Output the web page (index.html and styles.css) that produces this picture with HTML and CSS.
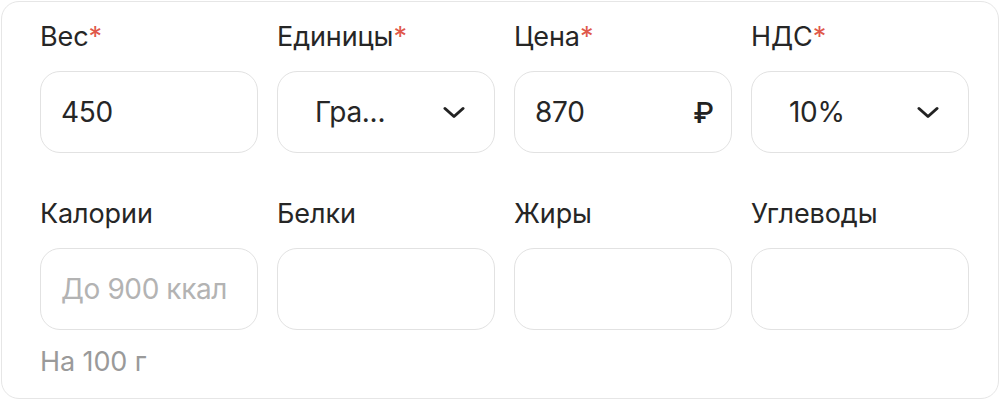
FILE: index.html
```html
<!DOCTYPE html>
<html lang="ru">
<head>
<meta charset="utf-8">
<link rel="stylesheet" href="styles.css">
</head>
<body>
<div class="card">
  <div class="grid">
    <div class="field">
      <div class="label">Вес<span class="req">*</span></div>
      <div class="box"><span class="value">450</span></div>
    </div>
    <div class="field">
      <div class="label">Единицы<span class="req">*</span></div>
      <div class="box select"><span class="value">Гра...</span>
        <svg class="chev" width="22" height="13" viewBox="0 0 22 13"><path d="M2 2.5 L11 10.5 L20 2.5" fill="none" stroke="#222" stroke-width="3" stroke-linecap="round" stroke-linejoin="round"/></svg>
      </div>
    </div>
    <div class="field">
      <div class="label">Цена<span class="req">*</span></div>
      <div class="box"><span class="value">870</span><span class="rub">₽</span></div>
    </div>
    <div class="field">
      <div class="label">НДС<span class="req">*</span></div>
      <div class="box select"><span class="value">10%</span>
        <svg class="chev" width="22" height="13" viewBox="0 0 22 13"><path d="M2 2.5 L11 10.5 L20 2.5" fill="none" stroke="#222" stroke-width="3" stroke-linecap="round" stroke-linejoin="round"/></svg>
      </div>
    </div>
  </div>
  <div class="grid row2">
    <div class="field">
      <div class="label">Калории</div>
      <div class="box"><span class="placeholder">До 900 ккал</span></div>
      <div class="hint">На 100 г</div>
    </div>
    <div class="field">
      <div class="label">Белки</div>
      <div class="box"></div>
    </div>
    <div class="field">
      <div class="label">Жиры</div>
      <div class="box"></div>
    </div>
    <div class="field">
      <div class="label">Углеводы</div>
      <div class="box"></div>
    </div>
  </div>
</div>
</body>
</html>
```
FILE: styles.css
```css
html, body {
  margin: 0;
  padding: 0;
  background: #ffffff;
}
body {
  font-family: Inter, "Noto Sans", "DejaVu Sans", sans-serif;
  color: #222222;
}
.card {
  margin: 1px;
  border: 1px solid #e6e6e6;
  border-radius: 18px;
  box-sizing: border-box;
  height: 398px;
  padding: 18px 28px 0 38px;
}
.grid {
  display: grid;
  grid-template-columns: repeat(4, 218px);
  column-gap: 19px;
}
.row2 {
  margin-top: 44px;
}
.field {
  display: flex;
  flex-direction: column;
}
.label {
  font-size: 27px;
  line-height: 34px;
  margin-bottom: 17px;
  letter-spacing: -0.1px;
  color: #262626;
}
.req {
  color: #e0584a;
}
.box {
  height: 82px;
  box-sizing: border-box;
  border: 1px solid #e2e2e2;
  border-radius: 20px;
  display: flex;
  align-items: center;
  padding: 0 19px 0 20px;
  font-size: 28px;
}
.select {
  padding: 0 29px 0 37px;
  justify-content: space-between;
}
.value {
  color: #262626;
  letter-spacing: -0.3px;
}
.rub {
  margin-left: auto;
  margin-right: -2px;
  font-size: 29px;
  font-weight: 500;
}
.placeholder {
  color: #b3b3b3;
  letter-spacing: -0.4px;
}
.hint {
  margin-top: 16px;
  font-size: 27px;
  line-height: 32px;
  color: #9a9a9a;
  letter-spacing: -0.1px;
}
.chev {
  display: block;
}
```
